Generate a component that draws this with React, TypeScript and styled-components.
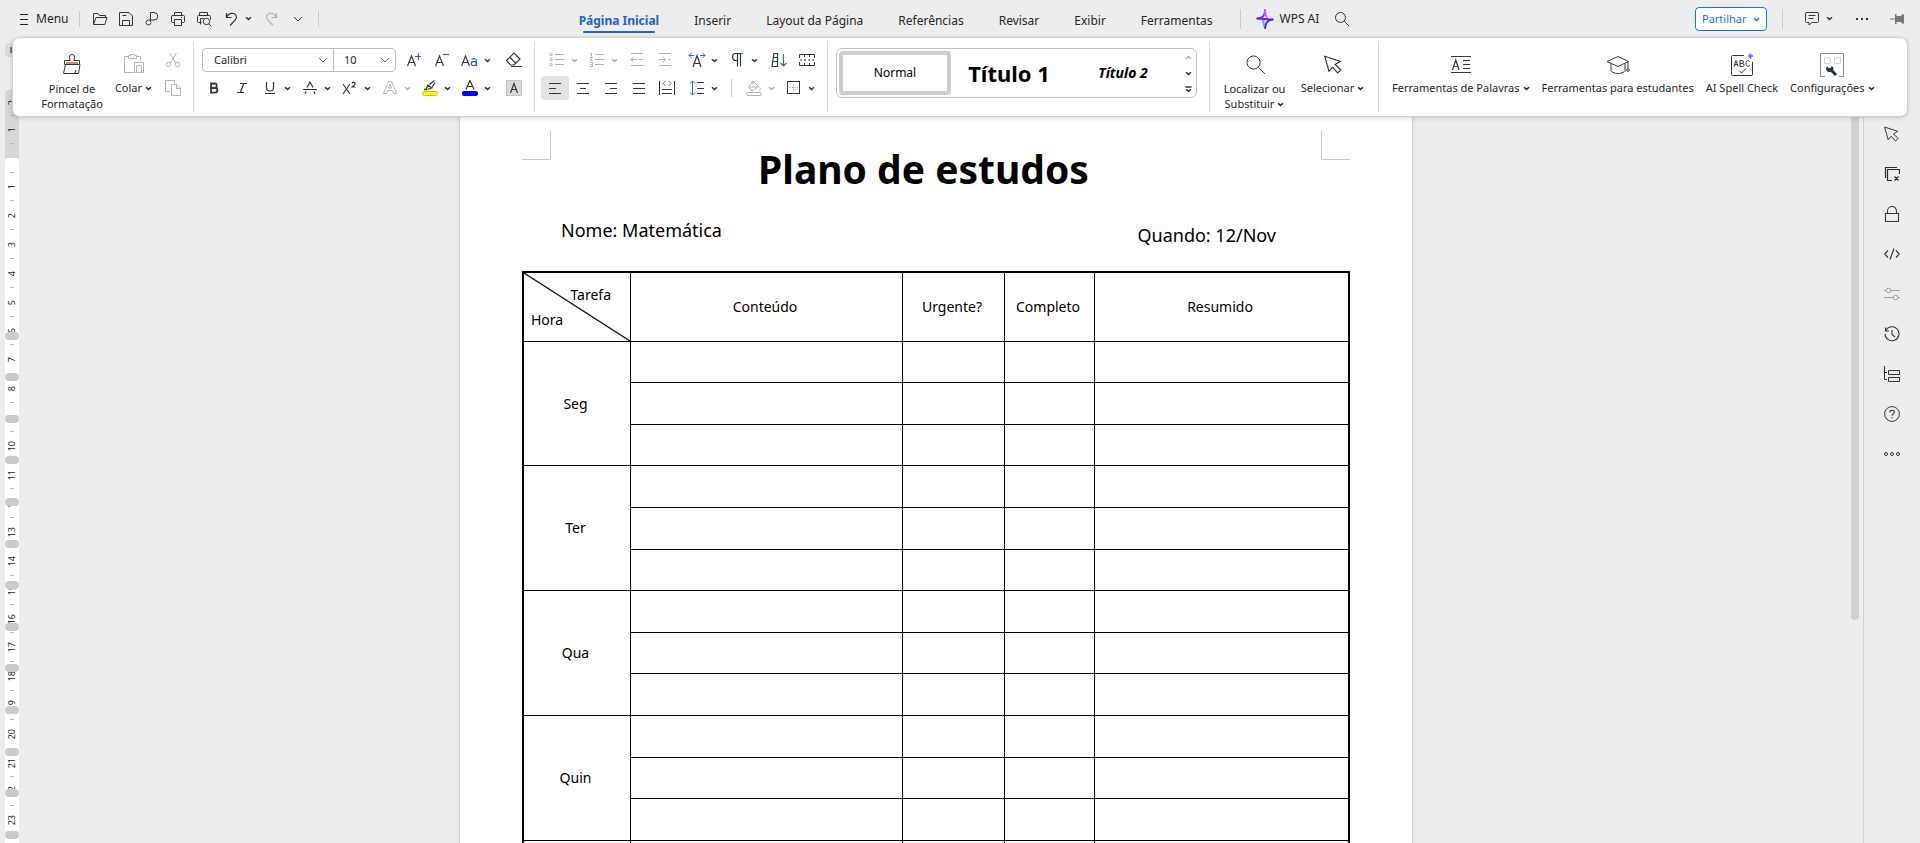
import React from "react";
import styled, { createGlobalStyle, css } from "styled-components";

const INK = "#363636";
const MUTED = "#b3b3b3";
const BLUE = "#2f5fe0";
const LINE = "#d2d2d2";

/* Row heights repeat in fives so that the table and the ruler stay in step. */
const stepHeights = css`
  height: 42px;
  &:nth-child(5n + 1),
  &:nth-child(5n + 3) {
    height: 41px;
  }
`;

const GlobalStyle = createGlobalStyle`
  *, *::before, *::after { box-sizing: border-box; }
  body {
    margin: 0;
    background: #ededed;
    color: #262626;
    font: 12px/16px "Noto Sans", "Open Sans", sans-serif;
  }
  button, select, input { font: inherit; color: inherit; }
  ul, h1, p { margin: 0; padding: 0; }
  ul { list-style: none; }
`;

const Shell = styled.div`
  display: flex;
  flex-direction: column;
  height: 100vh;
  overflow: hidden;
`;

const TopBar = styled.header`
  display: grid;
  grid-template-columns: 1fr auto 1fr;
  flex: none;
  height: 37px;
  padding: 0 9px 0 20px;
`;

const BarSide = styled.div<{ $end?: boolean }>`
  display: flex;
  align-items: center;
  justify-content: ${(p) => (p.$end ? "flex-end" : "flex-start")};
  height: 37px;
`;

const PlainButton = styled.button<{ $gap?: number }>`
  display: flex;
  align-items: center;
  gap: ${(p) => p.$gap ?? 8}px;
  padding: 0;
  border: 0;
  background: none;
  white-space: nowrap;
`;

const IconButton = styled.button<{ $w?: number; $on?: boolean; $muted?: boolean; $gap?: number }>`
  display: flex;
  flex: none;
  align-items: center;
  justify-content: center;
  width: ${(p) => p.$w ?? 28}px;
  height: 24px;
  margin: 0 0 0 ${(p) => p.$gap ?? 0}px;
  padding: 0;
  border: 0;
  border-radius: 4px;
  background: ${(p) => (p.$on ? "#e3e3e3" : "none")};
  color: ${(p) => (p.$muted ? MUTED : INK)};
`;

const MenuButton = styled(IconButton)`
  width: 40px;
  justify-content: space-between;
  padding: 0 5px 0 4px;
`;

const Divider = styled.span<{ $h?: number; $before?: number; $after?: number }>`
  flex: none;
  width: 1px;
  height: ${(p) => p.$h ?? 20}px;
  margin: 0 ${(p) => p.$after ?? 7}px 0 ${(p) => p.$before ?? 7}px;
  background: #cbcbcb;
`;

const Tabs = styled.nav`
  display: flex;
  align-items: flex-start;
  align-self: stretch;
  gap: 35px;
  padding-left: 4px;
`;

const Tab = styled.a<{ $active?: boolean }>`
  position: relative;
  padding-top: 13px;
  color: ${(p) => (p.$active ? "#2463c9" : "#262626")};
  font-weight: ${(p) => (p.$active ? 700 : 400)};
  text-decoration: none;
  white-space: nowrap;
  ${(p) =>
    p.$active &&
    css`
      &::after {
        content: "";
        position: absolute;
        inset: 31px 4px auto 4px;
        height: 2px;
        border-radius: 1px;
        background: #2463c9;
      }
    `}
`;

const ShareButton = styled.button`
  display: flex;
  align-items: center;
  justify-content: space-between;
  width: 72px;
  height: 24px;
  margin-top: 1px;
  padding: 0 6px;
  border: 1px solid #1f6bff;
  border-radius: 4px;
  background: #fff;
  color: #1f6bff;
  font-size: 11px;
`;

const Body = styled.div`
  display: grid;
  flex: 1;
  min-height: 0;
  grid-template: minmax(0, 1fr) / minmax(0, 1fr);
`;

const Ribbon = styled.section`
  display: flex;
  grid-area: 1 / 1;
  align-self: start;
  z-index: 2;
  height: 80px;
  margin: 0 12px;
  border: 1px solid ${LINE};
  border-radius: 8px;
  background: #fff;
  box-shadow: 0 1px 4px rgba(0, 0, 0, 0.16);
  font-size: 11px;
`;

const Group = styled.div<{ $pad?: number }>`
  display: flex;
  flex: none;
  align-items: flex-start;
  margin: 4px 0;
  padding: 6px 6px 0 ${(p) => p.$pad ?? 6}px;
  border-right: 1px solid #d6d6d6;
  &:last-child {
    border-right: 0;
  }
`;

const Rows = styled.div`
  display: flex;
  flex-direction: column;
  gap: 4px;
`;

const Row = styled.div<{ $indent?: number }>`
  display: flex;
  align-items: center;
  height: 24px;
  padding-left: ${(p) => p.$indent ?? 0}px;
`;

const BigButton = styled.button<{ $w?: number; $tall?: boolean }>`
  display: flex;
  flex-direction: column;
  align-items: center;
  gap: ${(p) => (p.$tall ? 4 : 3)}px;
  width: ${(p) => (p.$w ? `${p.$w}px` : "auto")};
  padding: 5px ${(p) => (p.$w ? 0 : 6)}px 0;
  border: 0;
  background: none;
  line-height: 15px;
  white-space: nowrap;
  & > svg {
    color: ${INK};
  }
`;

const BigLabel = styled.span`
  & svg {
    margin-left: 3px;
    vertical-align: 1px;
  }
`;

const Combo = styled.div`
  display: flex;
  width: 194px;
  height: 24px;
  margin: 0 4px 0 2px;
  border: 1px solid #bdbdbd;
  border-radius: 4px;
`;

const ComboField = styled.label<{ $w?: number }>`
  display: flex;
  align-items: center;
  flex: ${(p) => (p.$w ? `0 0 ${p.$w}px` : "1")};
  min-width: 0;
  padding: 0 5px 0 11px;
  color: #262626;
  & > svg {
    color: #666;
  }
  & + & {
    padding-left: 10px;
    border-left: 1px solid #bdbdbd;
  }
`;

const ComboSelect = styled.select`
  appearance: none;
  flex: 1;
  min-width: 0;
  padding: 0;
  border: 0;
  outline: 0;
  background: none;
`;

const Gallery = styled.div`
  display: flex;
  align-items: center;
  gap: 2px;
  width: 361px;
  height: 50px;
  margin: 0 6px 0 2px;
  padding-left: 2px;
  border: 1px solid #c4c4c4;
  border-radius: 6px;
`;

const StyleCard = styled.button<{ $active?: boolean; $size: number; $strong?: boolean; $italic?: boolean }>`
  flex: none;
  width: 112px;
  height: 44px;
  padding: 0;
  border: 4px solid ${(p) => (p.$active ? "#cecece" : "transparent")};
  border-radius: 4px;
  background: #fff;
  color: #000;
  font-size: ${(p) => p.$size}px;
  font-weight: ${(p) => (p.$strong ? 700 : 400)};
  font-style: ${(p) => (p.$italic ? "italic" : "normal")};
  line-height: 32px;
`;

const GalleryArrows = styled.div`
  display: flex;
  flex-direction: column;
  flex: 1;
  align-items: center;
`;

const ArrowButton = styled.button<{ $muted?: boolean }>`
  display: flex;
  align-items: center;
  justify-content: center;
  width: 14px;
  height: 16px;
  padding: 0;
  border: 0;
  background: none;
  color: ${(p) => (p.$muted ? MUTED : INK)};
`;

const Workspace = styled.div`
  display: flex;
  grid-area: 1 / 1;
  min-height: 0;
  padding-left: 5px;
  overflow: hidden;
`;

const Ruler = styled.div`
  position: relative;
  flex: none;
  width: 14px;
  overflow: hidden;
  font-size: 9px;
  line-height: 14px;
`;

const RulerCorner = styled.div`
  height: 14px;
  margin: 6px 0 33px;
  padding: 4px 0 0 5px;
  border-radius: 4px;
  background: #d9d9d9;
  &::after {
    content: "";
    display: block;
    width: 5px;
    height: 6px;
    border: solid #777;
    border-width: 0 0 2px 2px;
  }
`;

const RulerMargin = styled.div`
  height: 68px;
  border-radius: 4px 4px 0 0;
  background: #d6d6d6;
`;

const RulerPage = styled.div`
  border-radius: 4px 4px 0 0;
  background: #fff;
`;

const Tick = styled.div<{ $h: number }>`
  display: flex;
  align-items: center;
  justify-content: center;
  height: ${(p) => p.$h}px;
  background: linear-gradient(#b5b5b5, #b5b5b5) center bottom / 4px 1px no-repeat;
`;

const RulerNumber = styled.span`
  writing-mode: vertical-rl;
  transform: rotate(180deg);
`;

const RowMarkers = styled.ul`
  position: absolute;
  top: 295px;
  left: 0;
`;

const RowMarker = styled.li`
  ${stepHeights}
  &::before {
    content: "";
    display: block;
    width: 14px;
    height: 8px;
    border-radius: 4px;
    background: #cacaca;
  }
`;

const Canvas = styled.main`
  display: flex;
  flex: 1;
  justify-content: center;
  min-width: 0;
  padding-left: 2px;
  overflow: hidden;
`;

const Page = styled.article`
  flex: none;
  align-self: flex-start;
  width: 952px;
  padding: 94px 62px 40px;
  background: #fff;
  box-shadow: 0 0 0 1px #cfcfcf, 0 0 6px rgba(0, 0, 0, 0.1);
  color: #000;
`;

const PageHead = styled.div`
  display: flex;
  align-items: flex-start;
`;

const MarginMark = styled.span<{ $side: "left" | "right" }>`
  flex: none;
  width: 29px;
  height: 29px;
  border: solid #c8c8c8;
  border-width: ${(p) => (p.$side === "left" ? "0 1px 1px 0" : "0 0 1px 1px")};
`;

const Title = styled.h1`
  flex: 1;
  padding: 14px 25px 0 0;
  font-size: 39px;
  font-weight: 700;
  line-height: 48px;
  text-align: center;
`;

const Facts = styled.div`
  display: flex;
  justify-content: space-between;
  padding: 25px 74px 24px 39px;
  font-size: 18px;
  line-height: 24px;
`;

const Fact = styled.p<{ $drop?: number }>`
  padding-top: ${(p) => p.$drop ?? 0}px;
  padding-bottom: ${(p) => 5 - (p.$drop ?? 0)}px;
`;

const Plan = styled.table`
  width: 100%;
  border: 2px solid #000;
  border-collapse: separate;
  border-spacing: 0;
  table-layout: fixed;
  font-size: 14px;
  line-height: 20px;
  th,
  td {
    padding: 0 3px 0 0;
    border: solid #000;
    border-width: 0 1px 1px 0;
    font-weight: 400;
    text-align: center;
    vertical-align: middle;
  }
  thead th:first-child {
    padding: 0;
  }
  thead th:last-child,
  td:last-child {
    border-right: 0;
  }
`;

const Col = styled.col<{ $w?: number }>`
  width: ${(p) => (p.$w ? `${p.$w}px` : "auto")};
`;

const HeadRow = styled.tr`
  height: 69px;
`;

const PlanRow = styled.tr`
  ${stepHeights}
`;

const CornerCell = styled.div`
  position: relative;
  display: flex;
  flex-direction: column;
  justify-content: center;
  gap: 5px;
  height: 68px;
  padding: 0 19px 0 7px;
  & > svg {
    position: absolute;
    inset: 0;
    width: 100%;
    height: 100%;
  }
`;

const CornerText = styled.span<{ $end?: boolean }>`
  text-align: ${(p) => (p.$end ? "right" : "left")};
`;

const ScrollTrack = styled.div`
  flex: none;
  width: 12px;
`;

const ScrollThumb = styled.div`
  width: 8px;
  height: 583px;
  border-radius: 4px;
  background: #d0d0d0;
`;

const SideBar = styled.aside`
  display: flex;
  flex: none;
  flex-direction: column;
  align-items: center;
  width: 57px;
  padding-top: 77px;
  border-left: 1px solid ${LINE};
`;

const SideButton = styled(IconButton)`
  height: 40px;
`;

/* ---------- icons ---------- */

type IconProps = { w?: number; h?: number; children: React.ReactNode };

const Icon = ({ w = 16, h = 16, children }: IconProps) => (
  <svg width={w} height={h} viewBox={`0 0 ${w} ${h}`} fill="none" stroke="currentColor" aria-hidden="true">
    {children}
  </svg>
);

const Chevron = () => (
  <Icon w={7} h={5}>
    <path d="M1 1.2l2.5 2.2L6 1.2" strokeWidth="1.5" />
  </Icon>
);
const WideChevron = () => (
  <Icon w={10} h={6}>
    <path d="M1 1l4 4 4-4" />
  </Icon>
);

const FolderIcon = () => (
  <Icon>
    <path d="M1.5 13.500V2.500h4.500l1.500 2h6v2M1.500 13.500L4 6.500h11l-2.200 7z" />
  </Icon>
);
const SaveIcon = () => (
  <Icon>
    <path d="M1.500 1.500h9.500l3.500 3.500v9.500h-13zM4.500 14.500v-5h7v5M4.500 4.500h4" />
  </Icon>
);
const PdfIcon = () => (
  <Icon>
    <path d="M6.500 11V1.500h3.500a3.700 3.700 0 0 1 0 7.500H4.500a2.500 2.500 0 1 0 2.500 2.500" />
  </Icon>
);
const PrintIcon = () => (
  <Icon>
    <path d="M4.500 4.500v-3h7v3M4.500 11.500h-2a1 1 0 0 1-1-1v-5a1 1 0 0 1 1-1h11a1 1 0 0 1 1 1v5a1 1 0 0 1-1 1h-2M4.500 8.500h7v6h-7zM11 6.500h1" />
  </Icon>
);
const PreviewIcon = () => (
  <Icon>
    <path d="M3.500 4.500v-3h8v3M5.500 11.500h-3a1 1 0 0 1-1-1v-5a1 1 0 0 1 1-1h11a1 1 0 0 1 1 1v3M4.500 13.500v-6h3M12.800 12.800l2.500 2.500" />
    <circle cx="10.500" cy="10.500" r="3.200" />
  </Icon>
);
const UndoIcon = () => (
  <Icon>
    <path d="M3.500 2v4.500h5M3.500 6.500C5 3 8 2 10.500 2.500c3 .8 3.800 4 2 6.200L7 14.500" strokeWidth="1.200" />
  </Icon>
);
const RedoIcon = () => (
  <Icon>
    <path d="M12.500 2v4.500h-5M12.500 6.500C11 3 8 2 5.500 2.500c-3 .8-3.800 4-2 6.200L9 14.500" strokeWidth="1.200" />
  </Icon>
);
const HamburgerIcon = () => (
  <Icon w={8} h={12}>
    <path d="M0 1.500h8M0 6.500h8M0 11.500h8" />
  </Icon>
);
const SearchIcon = ({ size = 16 }: { size?: number }) => (
  <svg width={size} height={size} viewBox="0 0 16 16" fill="none" stroke="currentColor" aria-hidden="true">
    <circle cx="6.500" cy="6.500" r="5" strokeWidth={16 / size} />
    <path d="M10.200 10.200l5 5" strokeWidth={16 / size} />
  </svg>
);
const SparkIcon = () => (
  <svg width="18" height="20" viewBox="0 0 18 20" fill="none" aria-hidden="true">
    <path d="M9 1c0 5-1.500 8-7.500 8.500" stroke="#8a2df5" strokeWidth="2" strokeLinecap="round" />
    <path d="M9 1.500c.5 4 1.200 7 2.500 8" stroke="#e15cf0" strokeWidth="2" strokeLinecap="round" />
    <path d="M7 11c.4 3 1.200 6 2 8" stroke="#4db2ff" strokeWidth="2" strokeLinecap="round" />
    <path d="M1.500 9.500c5 0 9 1 15 1" stroke="#6a1cf5" strokeWidth="2" strokeLinecap="round" />
    <path d="M16.500 10.500C11.500 11 9.500 14 9.200 19" stroke="#5a25ff" strokeWidth="2" strokeLinecap="round" />
  </svg>
);
const CommentIcon = () => (
  <Icon>
    <path d="M1.500 2.500a1 1 0 0 1 1-1h11a1 1 0 0 1 1 1v8a1 1 0 0 1-1 1H8l-3 2.500v-2.500H2.500a1 1 0 0 1-1-1zM4.500 4.500h7M4.500 7.500h5" />
  </Icon>
);
const DotsIcon = () => (
  <Icon w={14} h={4}>
    <path d="M1 2h2M6 2h2M11 2h2" strokeWidth="2" />
  </Icon>
);
const PinIcon = () => (
  <Icon w={16} h={12}>
    <path d="M0 6h6" stroke="#777" />
    <path d="M5 1v10h1.500V9h5v1.500H14v-9h-2.500V3h-5V1z" fill="#777" stroke="none" />
  </Icon>
);

const BrushIcon = () => (
  <Icon w={20} h={22}>
    <path d="M2.500 7.500h5.500L7.500 4a2.500 2.500 0 0 1 5 0L12 7.500h5.500v4h-15zM3.500 11.500L1.500 20.500h15l1.500-9M12.500 20.500l1.500-3.500" />
    <path d="M4 10h12" stroke="#d2622a" strokeWidth="1.500" />
  </Icon>
);
const PasteIcon = () => (
  <Icon w={22} h={22}>
    <g stroke={MUTED}>
      <path d="M5.500 3.500h-4v16h9M13.500 3.500h4v4M5.500 2.500h2v-1h4v1h2v3h-8z" />
      <path d="M11.500 9.500h9v10h-9zM13.500 12.500h5v7h-5z" />
    </g>
  </Icon>
);
const CutIcon = () => (
  <Icon>
    <path d="M4.500 1l6.500 10M11.500 1L5 11" />
    <circle cx="3.500" cy="12.500" r="2.200" />
    <circle cx="12.500" cy="12.500" r="2.200" />
  </Icon>
);
const CopyIcon = () => (
  <Icon>
    <path d="M5 11.500H.5V.5h9v3M6.500 4.500h5.500l3.500 3.500v7.500h-9zM11.500 4.500v4h4" />
  </Icon>
);

const LetterA = ({ x = 0, y = 0 }: { x?: number; y?: number }) => (
  <path d={`M${x + 0.5} ${y + 11}L${x + 4.5} ${y + 1}L${x + 8.5} ${y + 11}M${x + 2} ${y + 7.5}h5`} strokeWidth="1.200" />
);
const GrowIcon = () => (
  <Icon>
    <LetterA x={1} y={3} />
    <path d="M9 4.500h6M12.500 1v7" stroke={BLUE} strokeWidth="1.200" />
  </Icon>
);
const ShrinkIcon = () => (
  <Icon>
    <LetterA x={1} y={3} />
    <path d="M9 2.500h6" stroke={BLUE} strokeWidth="1.200" />
  </Icon>
);
const CaseIcon = () => (
  <Icon w={18}>
    <LetterA x={0} y={3} />
    <g stroke={BLUE} strokeWidth="1.200">
      <ellipse cx="12.800" cy="11.500" rx="2.500" ry="2.200" />
      <path d="M11 7.200c1.500-1 4.500-.8 4.500 1.800v5.200" />
    </g>
  </Icon>
);
const EraserIcon = () => (
  <Icon w={18} h={18}>
    <path d="M1.500 9.500l7.500-7.500 6 6L9 14H5.500zM5 6.500l6 6M6 15.500h11" strokeWidth="1.200" />
  </Icon>
);
const BoldIcon = () => (
  <Icon w={10} h={12}>
    <path d="M2 1.500h3.500a2.200 2.200 0 0 1 0 4.500H2zM2 6h4a2.300 2.300 0 0 1 0 4.700H2z" strokeWidth="1.800" />
  </Icon>
);
const ItalicIcon = () => (
  <Icon w={12} h={12}>
    <path d="M4 1.500h7M1 10.500h7M7.800 1.500l-3.500 9" strokeWidth="1.200" />
  </Icon>
);
const UnderlineIcon = () => (
  <Icon w={12} h={14}>
    <path d="M2.500 1v5.500a3.500 3.500 0 0 0 7 0V1M1 12.500h10" strokeWidth="1.200" />
  </Icon>
);
const StrikeIcon = () => (
  <Icon w={14} h={14}>
    <path d="M4 6.500L7 1l3 5.500M0 8.500h14M3 10.500L2 13M11 10.500l1 2.500" strokeWidth="1.200" />
  </Icon>
);
const SuperIcon = () => (
  <Icon w={16} h={14}>
    <path d="M1 3l7 10M8 3L1 13" strokeWidth="1.200" />
    <path d="M10 2.500c.5-2 3.500-1.500 3 .5-.2 1-2 2-3 3h3.500" strokeWidth="1.200" />
  </Icon>
);
const OutlineAIcon = () => (
  <Icon w={16}>
    <path d="M1.500 13.500l5-12h3l5 12h-3l-1.200-3H5.700l-1.200 3zM6.500 8h3L8 4z" />
  </Icon>
);
const HighlightIcon = () => (
  <Icon w={18}>
    <path d="M3 9.500h3M5 9.500l2-4.500 3.500 3-4 1.500M8.500 4.500l5-4M11 7.500l3-5" strokeWidth="1.300" />
    <rect x="1.500" y="11.500" width="15" height="4" rx="2" fill="#ff0" stroke="#c2c200" />
  </Icon>
);
const FontColorIcon = () => (
  <Icon w={18}>
    <path d="M5 9.500L9 .5l4 9M6.500 6.500h5" strokeWidth="1.200" />
    <rect x="1" y="11" width="16" height="5" rx="2" fill="#0000f5" stroke="none" />
  </Icon>
);
const ShadeIcon = () => (
  <Icon>
    <rect x=".5" y=".5" width="15" height="15" fill="#d9d9d9" stroke="#c4c4c4" />
    <path d="M4.500 13L8 3.500l3.500 9.500M5.800 9.500h4.500" strokeWidth="1.200" />
  </Icon>
);
const BulletsIcon = () => (
  <Icon>
    <path d="M6 2.500h9M6 7.500h9M6 12.500h9" />
    <circle cx="2" cy="2.500" r="1.200" />
    <circle cx="2" cy="7.500" r="1.200" />
    <circle cx="2" cy="12.500" r="1.200" />
  </Icon>
);
const NumbersIcon = () => (
  <Icon>
    <path d="M6 2.500h9M6 7.500h9M6 12.500h9M1 1.500h1.500v3M1 5.500h2.500L1 8.500h2.500M1 10.500h2.500v4H1M1.500 12.500h2" />
  </Icon>
);
const OutdentIcon = () => (
  <Icon w={14}>
    <path d="M1 1.500h12M9 7.500h4M1 13.500h12M1 7.500h6M4 4.500l-3 3 3 3" />
  </Icon>
);
const IndentIcon = () => (
  <Icon w={14}>
    <path d="M1 1.500h12M10 7.500h3M1 13.500h12M1 7.500h6M4.500 4.500l3 3-3 3" />
  </Icon>
);
const SpacingAIcon = () => (
  <Icon w={18}>
    <path d="M5 15L9 3.500 13 15M6.500 11.500h5" strokeWidth="1.200" />
    <path d="M1 3.500h5M3.500 1L1 3.500 3.500 6M17 3.500h-5M14.500 1L17 3.500 14.500 6" stroke={BLUE} />
  </Icon>
);
const ParaIcon = () => (
  <Icon w={12}>
    <path d="M6.500 8.500H5a3.500 3.500 0 0 1 0-7h6.500M6.500 1.500v13M9.500 1.500v13" stroke="#24324d" strokeWidth="1.200" />
  </Icon>
);
const SortIcon = () => (
  <Icon w={18}>
    <path d="M2 14.500L4 1.500h3.500v13zM4 5.500h3.500M3.500 9.500h4" strokeWidth="1.200" />
    <path d="M13.500 2v12M10.500 11l3 3 3-3" stroke={BLUE} strokeWidth="1.200" />
  </Icon>
);
const TabsIcon = () => (
  <Icon>
    <path d="M.5 6V2.500h15V6M.5 10v3.500h15V10M5.500 2.500V5M10.500 2.500V5M5.500 13.500V11M10.500 13.500V11M1 8h2M5 8h2M9 8h2M13 8h2" />
  </Icon>
);
const AlignIcon = ({ d }: { d: string }) => (
  <Icon w={14} h={12}>
    <path d={d} />
  </Icon>
);
const DistributeIcon = () => (
  <Icon>
    <path d="M.5 1v14M15.500 1v14M3 9.500h10M3 13.500h10" />
    <path d="M6.500 1L4 3.500 6.500 6M9.500 1L12 3.500 9.500 6" stroke={BLUE} />
  </Icon>
);
const LineGapIcon = () => (
  <Icon>
    <path d="M8 2.500h7M8 8.500h7M8 13.500h7" strokeWidth="1.200" />
    <path d="M3.500 1v14M1 3.500L3.500 1 6 3.500M1 12.500L3.500 15 6 12.500" stroke={BLUE} />
  </Icon>
);
const BucketIcon = () => (
  <Icon>
    <path d="M7 1l5.500 5.500-5 4H5L2.500 7zM3 7h9M13.500 7.500c1.500 2 .5 3 0 3M7 1v3" />
    <rect x=".5" y="12.500" width="15" height="3" rx="1.500" />
  </Icon>
);
const BorderIcon = () => (
  <Icon w={14} h={14}>
    <rect x=".5" y=".5" width="12" height="12" />
    <path d="M6.500 3v8M2.500 6.500h8" strokeDasharray="1 1.500" stroke="#8a8a8a" />
  </Icon>
);
const CursorIcon = ({ size = 18 }: { size?: number }) => (
  <svg width={size} height={size} viewBox="0 0 18 18" fill="none" stroke="currentColor" strokeWidth="1.100" aria-hidden="true">
    <path d="M.7 1.200L4.700 15.500 8 11.500l5 5.500 3-3-5.500-5 5-3z" />
  </svg>
);
const WordToolsIcon = () => (
  <Icon w={20} h={18}>
    <path d="M0 .5h20M0 16.500h20M12 4.500h7M12 8.500h7M12 12.500h7" />
    <path d="M1.500 14L4.800 4l3.300 10M2.800 10.500h4" strokeWidth="1.200" />
  </Icon>
);
const CapIcon = () => (
  <Icon w={24} h={20}>
    <path d="M1 6.500L12 1.500l10.500 5L12 11.500zM5 8.500v7c0 1 3 3 7 3s7-2 7-3v-7M22 6.500v7" stroke="#2a3547" />
    <circle cx="22" cy="15" r="1.300" stroke="#2a3547" />
  </Icon>
);
const SpellIcon = () => (
  <Icon w={24} h={24}>
    <path d="M14 2.500H2.500a1 1 0 0 0-1 1v18a1 1 0 0 0 1 1h19a1 1 0 0 0 1-1V9" />
    <path d="M4 13.500l2-6 2 6M4.800 11.500h2.500M10 7.500h2c2 0 2 2.800 0 2.800h-2zM10 10.500h2.500c2 0 2 3 0 3H10zM20 8.800c-1.500-2-4-1.500-4 1.700s2.500 3.700 4 1.700M9 17.500l2.500 2.500 4.500-4.500" />
    <path d="M20.500 .5l.8 1.700 1.700.8-1.700.8-.8 1.700-.8-1.700-1.700-.8 1.700-.8z" fill="#8f5cff" stroke="#8f5cff" />
  </Icon>
);
const SettingsIcon = () => (
  <Icon w={24} h={24}>
    <path d="M5 23.500H.5V.5h23v23H19" stroke="#8c8c8c" />
    <path d="M4.500 4.500h6v6h-6zM14.500 4.500h6v6h-6z" stroke="#d5d5d5" />
    <path d="M9.500 15.500l6.500 6.500" stroke="#26303f" strokeWidth="3" />
    <path d="M7 13.500l2 2 2-.5.500-2c2 1 2.500 2.500 1.500 4.500l-3 1.500c-2.500.5-4-1.500-4-3.500z" fill="#26303f" stroke="none" />
  </Icon>
);

const ClearStyleIcon = () => (
  <Icon>
    <path d="M8 14.500H3.500V3.500h12V8M1.500 12V1.500H13M10.500 10.500l4 4M14.500 10.500l-4 4" stroke="#26303f" strokeWidth="1.200" />
  </Icon>
);
const LockIcon = () => (
  <Icon>
    <path d="M1.500 7.500h13v8h-13zM3.500 7.500V5a4.500 4.500 0 0 1 9 0v2.500" strokeWidth="1.100" />
  </Icon>
);
const CodeIcon = () => (
  <Icon>
    <path d="M4 4.500L.8 8 4 11.500M12 4.500L15.200 8 12 11.500M10 2.500L6 13.500" strokeWidth="1.200" />
  </Icon>
);
const SlidersIcon = () => (
  <Icon>
    <path d="M0 4.500h2.500M6.500 4.500H16M0 11.500h9.500M13.500 11.500H16" stroke="#a3a3a3" />
    <circle cx="4.500" cy="4.500" r="2.300" stroke="#a3a3a3" />
    <circle cx="11.500" cy="11.500" r="2.300" stroke="#a3a3a3" />
  </Icon>
);
const HistoryIcon = () => (
  <Icon>
    <path d="M1.800 4.500A7 7 0 1 1 1 8M1.500 1.500V5H5M8 4v4.500l3 2.500" strokeWidth="1.100" />
  </Icon>
);
const TreeIcon = () => (
  <Icon>
    <path d="M.5 0v13.500H3M.5 6.500H3M4.500 4.500h11v4h-11zM4.500 11.500h11v4h-11z" />
  </Icon>
);
const HelpIcon = () => (
  <Icon>
    <circle cx="8" cy="8" r="7.400" />
    <path d="M5.800 6.500c0-3 4.500-2.800 4.500-.3 0 1.500-2.300 1.700-2.300 3.600M8 11.200v1.300" strokeWidth="1.100" />
  </Icon>
);
const MoreIcon = () => (
  <Icon>
    <circle cx="2" cy="8" r="1.500" />
    <circle cx="8" cy="8" r="1.500" />
    <circle cx="14" cy="8" r="1.500" />
  </Icon>
);

/* ---------- composite controls ---------- */

type ToolProps = { label: string; icon: React.ReactNode; on?: boolean; muted?: boolean; gap?: number; w?: number };

const IconSlot = styled.span`
  display: flex;
  align-items: center;
  justify-content: center;
  width: 20px;
`;

const Tool = ({ label, icon, on, muted, gap, w }: ToolProps) => (
  <IconButton type="button" aria-label={label} $on={on} $muted={muted} $gap={gap} $w={w}>
    {icon}
  </IconButton>
);

const DropTool = ({ label, icon, muted, gap }: ToolProps) => (
  <MenuButton type="button" aria-label={label} aria-haspopup="menu" $muted={muted} $gap={gap}>
    <IconSlot>{icon}</IconSlot>
    <Chevron />
  </MenuButton>
);

const tabs = [
  "Página Inicial",
  "Inserir",
  "Layout da Página",
  "Referências",
  "Revisar",
  "Exibir",
  "Ferramentas",
];

/* The last block of the plan has no day filled in yet. */
const days = ["Seg", "Ter", "Qua", "Quin", ""];

const sideTools: [string, React.ReactNode][] = [
  ["Selecionar", <CursorIcon size={16} />],
  ["Estilos", <ClearStyleIcon />],
  ["Restringir edição", <LockIcon />],
  ["Código", <CodeIcon />],
  ["Propriedades", <SlidersIcon />],
  ["Histórico", <HistoryIcon />],
  ["Navegação", <TreeIcon />],
  ["Ajuda", <HelpIcon />],
  ["Mais", <MoreIcon />],
];

const TopArea = () => (
  <TopBar>
    <BarSide>
      <PlainButton type="button">
        <HamburgerIcon />
        Menu
      </PlainButton>
      <Divider $h={16} $before={11} />
      <Tool label="Abrir" icon={<FolderIcon />} w={26} />
      <Tool label="Guardar" icon={<SaveIcon />} w={26} />
      <Tool label="Exportar PDF" icon={<PdfIcon />} w={26} />
      <Tool label="Imprimir" icon={<PrintIcon />} w={26} />
      <Tool label="Pré-visualizar" icon={<PreviewIcon />} w={26} />
      <DropTool label="Desfazer" icon={<UndoIcon />} />
      <Tool label="Refazer" icon={<RedoIcon />} w={26} gap={2} muted />
      <Tool label="Personalizar" icon={<WideChevron />} w={26} />
      <Divider $h={16} />
    </BarSide>
    <BarSide>
      <Tabs>
        {tabs.map((name, i) => (
          <Tab key={name} href="#" $active={i === 0}>
            {name}
          </Tab>
        ))}
      </Tabs>
      <Divider $before={28} $after={15} />
      <PlainButton type="button" $gap={5}>
        <SparkIcon />
        WPS AI
      </PlainButton>
      <Tool label="Procurar" icon={<SearchIcon />} gap={9} />
    </BarSide>
    <BarSide $end>
      <ShareButton type="button">
        Partilhar
        <Chevron />
      </ShareButton>
      <Divider $before={15} $after={15} />
      <DropTool label="Comentários" icon={<CommentIcon />} />
      <Tool label="Mais opções" icon={<DotsIcon />} w={26} gap={11} />
      <Tool label="Fixar friso" icon={<PinIcon />} w={26} gap={10} />
    </BarSide>
  </TopBar>
);

const RibbonArea = () => (
  <Ribbon>
    <Group $pad={23}>
      <BigButton type="button" $w={72} $tall>
        <Icon w={20} h={24}>
          <BrushIcon />
        </Icon>
        <BigLabel>
          Pincel de
          <br />
          Formatação
        </BigLabel>
      </BigButton>
      <BigButton type="button" $w={51}>
        <Icon w={22} h={24}>
          <PasteIcon />
        </Icon>
        <BigLabel>
          Colar
          <Chevron />
        </BigLabel>
      </BigButton>
      <Rows>
        <Tool label="Cortar" icon={<CutIcon />} muted />
        <Tool label="Copiar" icon={<CopyIcon />} muted />
      </Rows>
    </Group>

    <Group>
      <Rows>
        <Row>
          <Combo>
            <ComboField>
              <ComboSelect aria-label="Tipo de letra">
                <option>Calibri</option>
              </ComboSelect>
              <WideChevron />
            </ComboField>
            <ComboField $w={62}>
              <ComboSelect aria-label="Tamanho">
                <option>10</option>
              </ComboSelect>
              <WideChevron />
            </ComboField>
          </Combo>
          <Tool label="Aumentar letra" icon={<GrowIcon />} />
          <Tool label="Diminuir letra" icon={<ShrinkIcon />} />
          <DropTool label="Maiúsculas e minúsculas" icon={<CaseIcon />} />
          <Tool label="Limpar formatação" icon={<EraserIcon />} gap={4} />
        </Row>
        <Row>
          <Tool label="Negrito" icon={<BoldIcon />} />
          <Tool label="Itálico" icon={<ItalicIcon />} />
          <DropTool label="Sublinhado" icon={<UnderlineIcon />} />
          <DropTool label="Rasurado" icon={<StrikeIcon />} />
          <DropTool label="Sobrescrito" icon={<SuperIcon />} />
          <DropTool label="Efeitos de texto" icon={<OutlineAIcon />} muted />
          <DropTool label="Realce" icon={<HighlightIcon />} />
          <DropTool label="Cor da letra" icon={<FontColorIcon />} />
          <Tool label="Sombreado de carateres" icon={<ShadeIcon />} gap={4} />
        </Row>
      </Rows>
    </Group>

    <Group>
      <Rows>
        <Row $indent={2}>
          <DropTool label="Marcas" icon={<BulletsIcon />} muted />
          <DropTool label="Numeração" icon={<NumbersIcon />} muted />
          <Tool label="Diminuir avanço" icon={<OutdentIcon />} muted />
          <Tool label="Aumentar avanço" icon={<IndentIcon />} muted />
          <DropTool label="Esquema asiático" icon={<SpacingAIcon />} gap={4} />
          <DropTool label="Marcas de parágrafo" icon={<ParaIcon />} />
          <Tool label="Ordenar" icon={<SortIcon />} gap={2} />
          <Tool label="Tabulações" icon={<TabsIcon />} />
        </Row>
        <Row>
          <Tool label="Alinhar à esquerda" icon={<AlignIcon d="M1 1.500h12M1 6.500h7M1 11.500h12" />} on />
          <Tool label="Centrar" icon={<AlignIcon d="M1 1.500h12M4 6.500h6M1 11.500h12" />} />
          <Tool label="Alinhar à direita" icon={<AlignIcon d="M1 1.500h12M6 6.500h7M1 11.500h12" />} />
          <Tool label="Justificar" icon={<AlignIcon d="M1 1.500h12M1 6.500h12M1 11.500h12" />} />
          <Tool label="Distribuir" icon={<DistributeIcon />} />
          <DropTool label="Espaçamento entre linhas" icon={<LineGapIcon />} gap={2} />
          <Divider $h={18} $before={8} $after={8} />
          <DropTool label="Sombreado" icon={<BucketIcon />} muted />
          <DropTool label="Limites" icon={<BorderIcon />} />
        </Row>
      </Rows>
    </Group>

    <Group>
      <Gallery>
        <StyleCard type="button" $size={12} $active>
          Normal
        </StyleCard>
        <StyleCard type="button" $size={22} $strong>
          Título 1
        </StyleCard>
        <StyleCard type="button" $size={14} $strong $italic>
          Título 2
        </StyleCard>
        <GalleryArrows>
          <ArrowButton type="button" aria-label="Estilos anteriores" $muted>
            <Icon w={7} h={5}>
              <path d="M1 3.800l2.500-2.200L6 3.800" strokeWidth="1.500" />
            </Icon>
          </ArrowButton>
          <ArrowButton type="button" aria-label="Estilos seguintes">
            <Chevron />
          </ArrowButton>
          <ArrowButton type="button" aria-label="Todos os estilos">
            <Icon w={7} h={7}>
              <path d="M.5 1h6M1 3.200l2.500 2.200L6 3.200" strokeWidth="1.400" />
            </Icon>
          </ArrowButton>
        </GalleryArrows>
      </Gallery>
    </Group>

    <Group>
      <BigButton type="button" $w={77} $tall>
        <Icon w={22} h={24}>
          <g transform="translate(1 1)">
            <SearchIcon size={21} />
          </g>
        </Icon>
        <BigLabel>
          Localizar ou
          <br />
          Substituir
          <Chevron />
        </BigLabel>
      </BigButton>
      <BigButton type="button" $w={79}>
        <Icon w={20} h={24}>
          <g transform="translate(1 2)">
            <CursorIcon size={19} />
          </g>
        </Icon>
        <BigLabel>
          Selecionar
          <Chevron />
        </BigLabel>
      </BigButton>
    </Group>

    <Group $pad={7}>
      <BigButton type="button">
        <Icon w={20} h={24}>
          <g transform="translate(0 3)">
            <WordToolsIcon />
          </g>
        </Icon>
        <BigLabel>
          Ferramentas de Palavras
          <Chevron />
        </BigLabel>
      </BigButton>
      <BigButton type="button">
        <Icon w={24} h={24}>
          <g transform="translate(0 2)">
            <CapIcon />
          </g>
        </Icon>
        <BigLabel>Ferramentas para estudantes</BigLabel>
      </BigButton>
      <BigButton type="button">
        <SpellIcon />
        <BigLabel>AI Spell Check</BigLabel>
      </BigButton>
      <BigButton type="button">
        <SettingsIcon />
        <BigLabel>
          Configurações
          <Chevron />
        </BigLabel>
      </BigButton>
    </Group>
  </Ribbon>
);

const VerticalRuler = () => (
  <Ruler aria-hidden="true">
    <RulerCorner />
    <RulerMargin>
      <Tick $h={26}>
        <RulerNumber>2</RulerNumber>
      </Tick>
      <Tick $h={28}>
        <RulerNumber>1</RulerNumber>
      </Tick>
    </RulerMargin>
    <RulerPage>
      <Tick $h={15} />
      {Array.from({ length: 23 }, (_, i) => (
        <Tick key={i} $h={i % 5 === 0 ? 28 : 29}>
          <RulerNumber>{i + 1}</RulerNumber>
        </Tick>
      ))}
      <Tick $h={29} />
    </RulerPage>
    <RowMarkers>
      {Array.from({ length: 13 }, (_, i) => (
        <RowMarker key={i} />
      ))}
    </RowMarkers>
  </Ruler>
);

const StudyPlan = () => (
  <Page>
    <PageHead>
      <MarginMark $side="left" />
      <Title>Plano de estudos</Title>
      <MarginMark $side="right" />
    </PageHead>
    <Facts>
      <Fact>Nome: Matemática</Fact>
      <Fact $drop={5}>Quando: 12/Nov</Fact>
    </Facts>
    <Plan>
      <colgroup>
        <Col $w={107} />
        <Col $w={272} />
        <Col $w={102} />
        <Col $w={90} />
        <Col />
      </colgroup>
      <thead>
        <HeadRow>
          <th scope="col">
            <CornerCell>
              <svg viewBox="0 0 106 68" preserveAspectRatio="none" aria-hidden="true">
                <path d="M0 0L106 68" stroke="#111" strokeWidth="1.300" />
              </svg>
              <CornerText $end>Tarefa</CornerText>
              <CornerText>Hora</CornerText>
            </CornerCell>
          </th>
          <th scope="col">Conteúdo</th>
          <th scope="col">Urgente?</th>
          <th scope="col">Completo</th>
          <th scope="col">Resumido</th>
        </HeadRow>
      </thead>
      <tbody>
        {days.flatMap((day, block) =>
          [0, 1, 2].map((slot) => (
            <PlanRow key={`${block}-${slot}`}>
              {slot === 0 && (
                <th scope="rowgroup" rowSpan={3}>
                  {day}
                </th>
              )}
              <td />
              <td />
              <td />
              <td />
            </PlanRow>
          ))
        )}
      </tbody>
    </Plan>
  </Page>
);

const App = () => (
  <>
    <GlobalStyle />
    <Shell>
      <TopArea />
      <Body>
        <RibbonArea />
        <Workspace>
          <VerticalRuler />
          <Canvas>
            <StudyPlan />
          </Canvas>
          <ScrollTrack>
            <ScrollThumb />
          </ScrollTrack>
          <SideBar>
            {sideTools.map(([label, icon]) => (
              <SideButton key={label} type="button" aria-label={label}>
                {icon}
              </SideButton>
            ))}
          </SideBar>
        </Workspace>
      </Body>
    </Shell>
  </>
);

export default App;
